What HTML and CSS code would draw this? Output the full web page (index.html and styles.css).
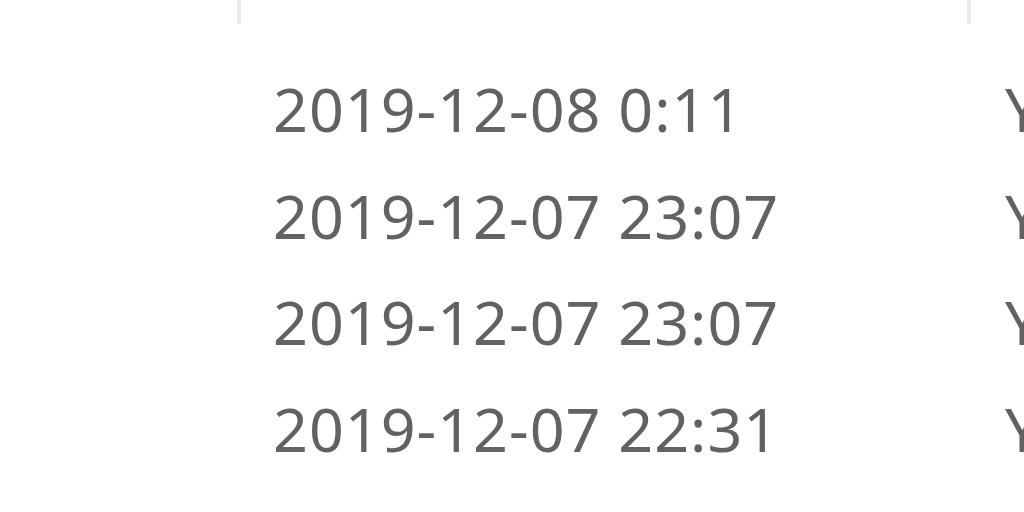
FILE: index.html
```html
<!DOCTYPE html>
<html lang="en">
  <head>
    <meta charset="UTF-8" />
    <meta name="viewport" content="width=device-width, initial-scale=1.0" />
    <title>File list</title>
    <link rel="stylesheet" href="styles.css">
  </head>
  <body>
    <div class="list">
      <!-- column header strip, only the dividers are visible -->
      <div class="header">
        <div class="col col-name"></div>
        <div class="col col-date"></div>
        <div class="col col-type"></div>
      </div>
      <div class="rows">
        <div class="row">
          <div class="cell col-name"></div>
          <div class="cell col-date">2019-12-08 0:11</div>
          <div class="cell col-type">YAML 文件</div>
        </div>
        <div class="row">
          <div class="cell col-name"></div>
          <div class="cell col-date">2019-12-07 23:07</div>
          <div class="cell col-type">YAML 文件</div>
        </div>
        <div class="row">
          <div class="cell col-name"></div>
          <div class="cell col-date">2019-12-07 23:07</div>
          <div class="cell col-type">YAML 文件</div>
        </div>
        <div class="row">
          <div class="cell col-name"></div>
          <div class="cell col-date">2019-12-07 22:31</div>
          <div class="cell col-type">YAML 文件</div>
        </div>
      </div>
    </div>
  </body>
</html>
```

FILE: styles.css
```css
body {
  margin: 0;
  background: #ffffff;
  font-family: "Noto Sans", "Noto Sans CJK SC", sans-serif;
  color: #626262;
  overflow: hidden;
}
.list {
  width: 1024px;
  height: 512px;
  overflow: hidden;
}
.header {
  display: flex;
  height: 24px;
}
.header .col {
  border-right: 4px solid #ececec;
}
.col-name {
  flex: 0 0 237px;
}
.col-date {
  flex: 0 0 726px;
}
.col-type {
  flex: 1 0 200px;
}
.header .col-type {
  border-right: none;
}
.rows {
  padding-top: 32px;
}
.row {
  display: flex;
  height: 106.7px;
  line-height: 106px;
  font-size: 61px;
  white-space: nowrap;
}
.cell.col-name {
  flex-basis: 241px;
}
.cell.col-date {
  flex-basis: 730px;
  padding-left: 32px;
  box-sizing: border-box;
  letter-spacing: 1px;
}
.cell.col-type {
  padding-left: 34px;
}
```
